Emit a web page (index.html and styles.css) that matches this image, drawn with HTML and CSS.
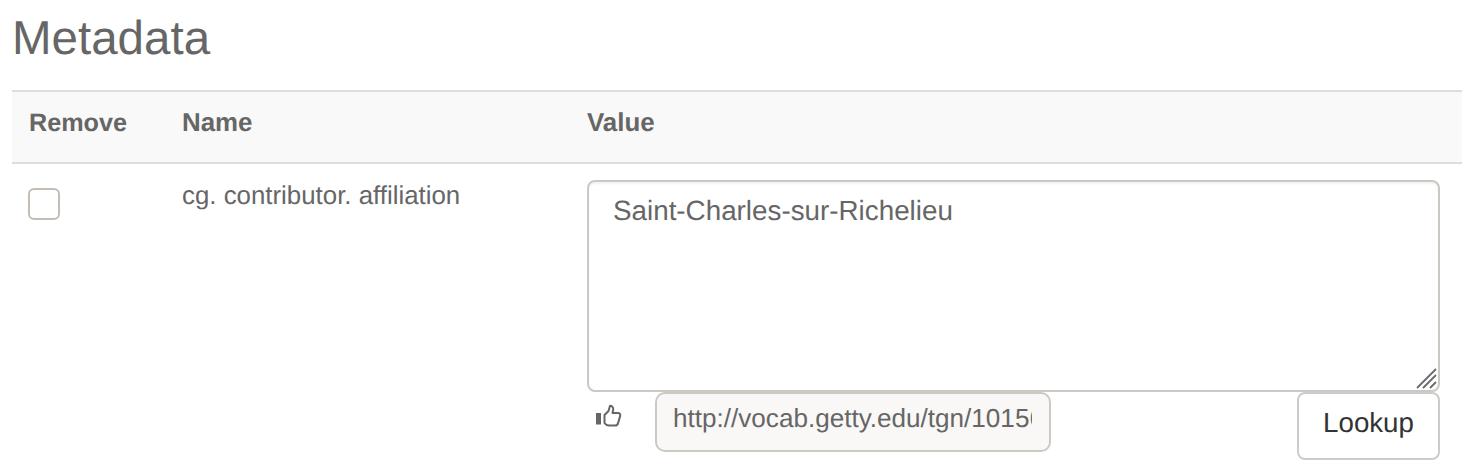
FILE: index.html
```html
<!DOCTYPE html>
<html lang="en">
<head>
<meta charset="utf-8">
<title>Metadata</title>
<link rel="stylesheet" href="styles.css">
</head>
<body>
<main class="page">
  <h2 class="title">Metadata</h2>
  <div class="row head">
    <div class="cell cell-remove">Remove</div>
    <div class="cell">Name</div>
    <div class="cell">Value</div>
  </div>
  <div class="row body">
    <div class="cell cell-check"><input class="check" type="checkbox" aria-label="Remove"></div>
    <div class="cell cell-name">cg. contributor. affiliation</div>
    <div class="cell cell-value">
      <div class="area-wrap">
        <textarea class="area">Saint-Charles-sur-Richelieu</textarea>
        <svg class="grip" width="22" height="22" viewBox="0 0 22 22" aria-hidden="true">
          <path d="M1 20 20 1M7 20 20 7M14 20 20 14" stroke="#6b6b6b" stroke-width="1.8" fill="none"/>
        </svg>
      </div>
      <div class="tools">
        <svg class="thumb" width="26" height="24" viewBox="0 0 26 24" aria-hidden="true">
          <rect x="0" y="9" width="5" height="11.500" fill="#666"/>
          <path d="M8.500 19V11L12.500 7 14 1.800c2 0 3.500 1.500 3.200 3.800L16.500 9H22c1.600 0 2.600 1.400 2.200 2.900l-2.200 7.500c-.4 1.300-1.500 2.100-2.800 2.100H13c-2 0-3.500-1-4.500-2.500" fill="none" stroke="#666" stroke-width="2" stroke-linejoin="round" stroke-linecap="round"/>
        </svg>
        <input class="uri" type="text" readonly value="http://vocab.getty.edu/tgn/1015666">
        <button class="lookup" type="button">Lookup</button>
      </div>
    </div>
  </div>
</main>
</body>
</html>
```
FILE: styles.css
```css
* { box-sizing: border-box; }
html, body { margin: 0; padding: 0; background: #fff; }
body {
  font-family: "Liberation Sans", Arial, sans-serif;
  font-size: 25.2px;
  color: #666;
  height: 476px;
  overflow: hidden;
  text-rendering: geometricPrecision;
}
.page { padding-left: 12px; }
.title {
  margin: 0;
  height: 90px;
  padding-top: 12px;
  font-size: 47.5px;
  line-height: 54px;
  font-weight: 400;
  color: #666;
}
.row {
  display: grid;
  grid-template-columns: 153px 405px 1fr;
}
.head {
  height: 74px;
  background: #f9f9f9;
  border-top: 2px solid #ddd;
  border-bottom: 2px solid #ddd;
  align-items: center;
  font-size: 25.9px;
  font-weight: 700;
  padding-bottom: 8px;
}
.cell { padding-left: 17px; }
.cell-remove { font-size: 25.2px; }
.cell-check { padding-left: 16px; }
.body { padding-top: 16px; }
.cell-name { font-size: 25.85px; line-height: 32px; }
.cell-value { padding-right: 22px; }
.check {
  appearance: none;
  display: block;
  width: 32px;
  height: 32px;
  margin: 8px 0 0;
  border: 2px solid #c3bdb5;
  border-radius: 6px;
  background: #fff;
}
.area-wrap { position: relative; height: 212px; }
.area {
  display: block;
  width: 100%;
  height: 100%;
  padding: 13px 24px 12px;
  border: 2px solid #ccc9c2;
  border-radius: 8px;
  box-shadow: inset 0 2px 2px rgba(0,0,0,.05);
  font: inherit;
  font-size: 27.8px;
  line-height: 32px;
  text-rendering: geometricPrecision;
  color: #666;
  resize: none;
  background: #fff;
  outline: none;
}
.grip { position: absolute; right: 2px; bottom: 2px; }
.tools {
  display: flex;
  align-items: flex-start;
}
.thumb { margin: 12px 0 0 9px; flex: none; }
.uri {
  width: 396px;
  height: 60px;
  margin-left: 33px;
  padding: 0 17px 8px 16px;
  border: 2px solid #ccc9c2;
  border-radius: 10px;
  background: #f9f8f6;
  font: inherit;
  font-size: 26.1px;
  text-rendering: geometricPrecision;
  color: #666;
  outline: none;
}
.lookup {
  width: 143px;
  height: 68px;
  margin-left: auto;
  padding: 0 0 6px;
  border: 2px solid #ccc;
  border-radius: 8px;
  background: #fff;
  font-family: inherit;
  font-size: 27.7px;
  text-rendering: geometricPrecision;
  color: #333;
}
```
